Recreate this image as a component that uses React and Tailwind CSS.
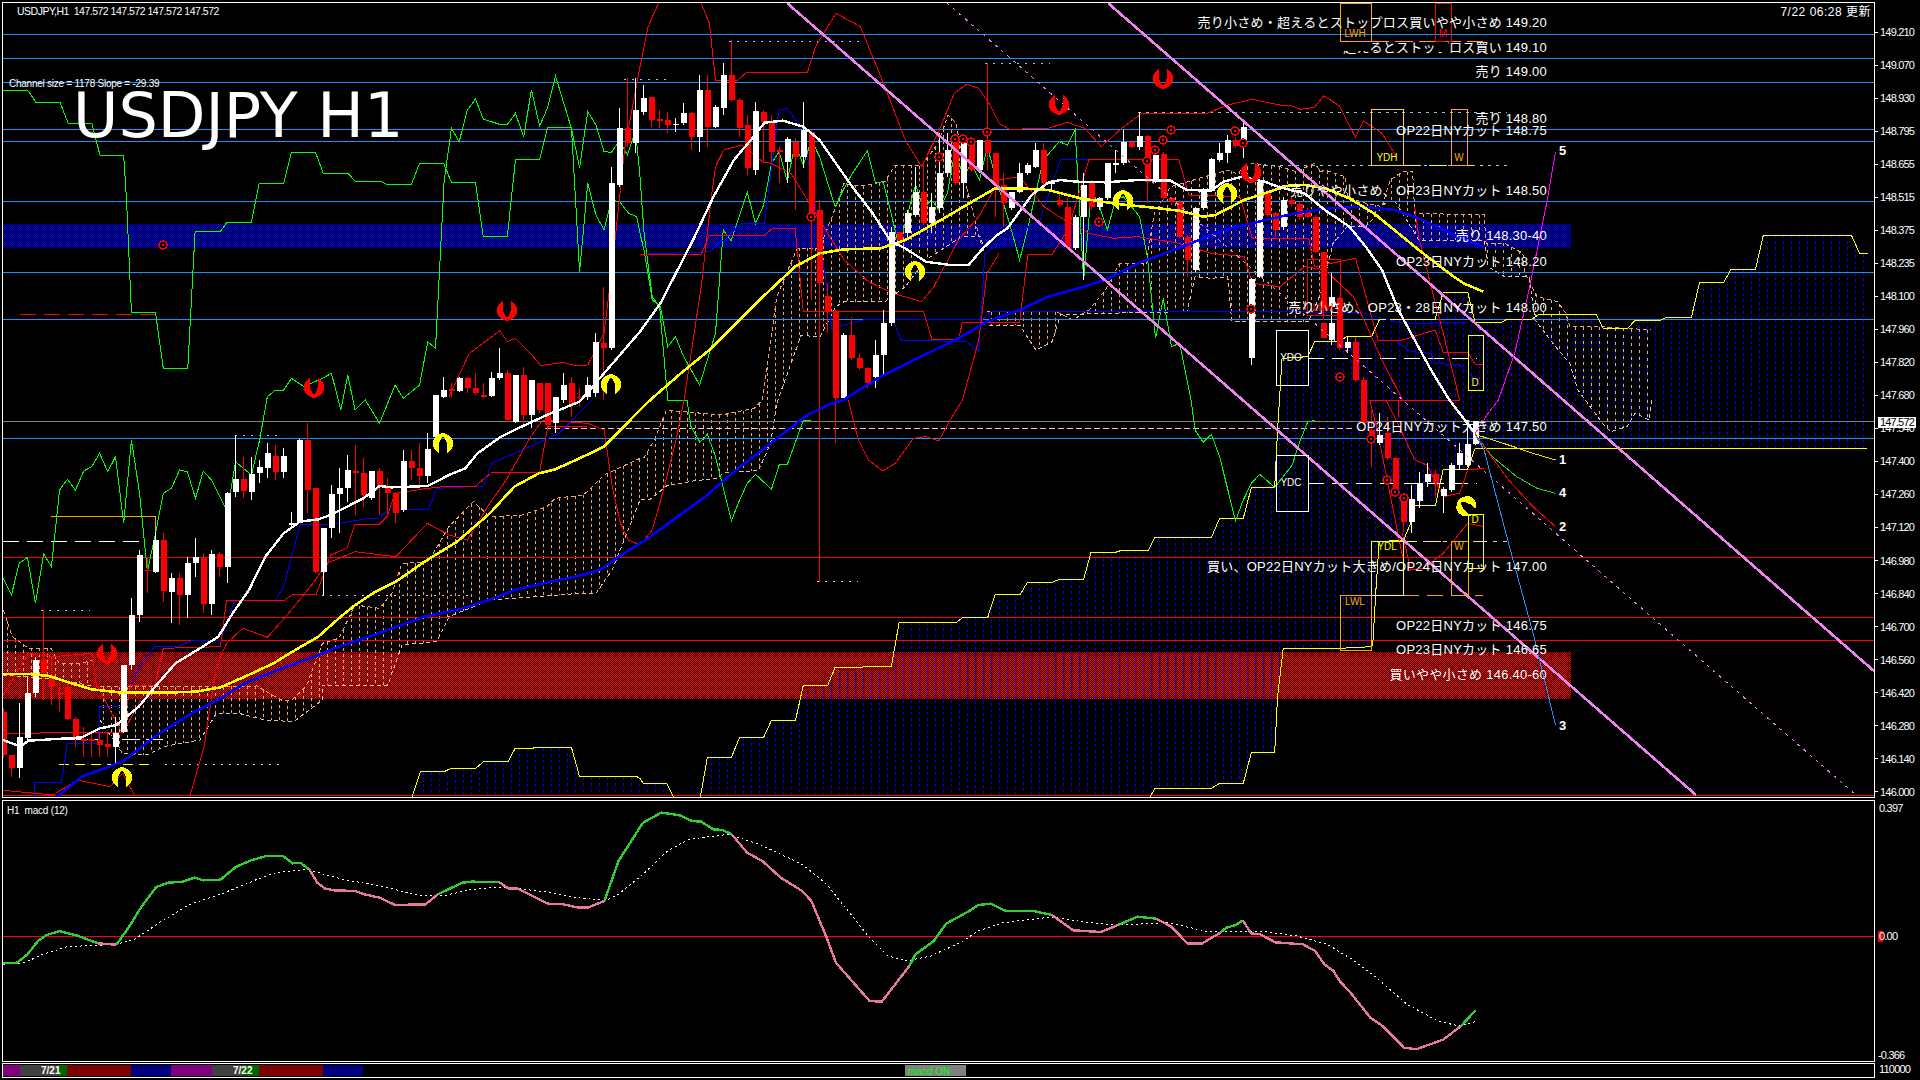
import React from 'react';

const jp = "font-['Liberation_Sans','Noto_Sans_CJK_JP',sans-serif]";

// reference tiles: zoomed coords -> page coords
const tiles = { a: [0, 0], b: [640, 0], c: [1280, 0], d: [0, 400], e: [640, 400], f: [1280, 400] };
const pts = (...parts) => {
  const out = [];
  parts.forEach(([t, arr]) => {
    const [x0, y0] = tiles[t];
    for (let i = 0; i < arr.length; i += 2) out.push([x0 + arr[i] / 2.45, y0 + arr[i + 1] / 3]);
  });
  return out;
};
const str = (p) => p.map((q) => q.join(',')).join(' ');

const at = (poly, x) => {
  for (let i = 0; i < poly.length - 1; i++) {
    const [x1, y1] = poly[i];
    const [x2, y2] = poly[i + 1];
    if (x >= x1 && x <= x2 && x2 !== x1) return y1 + ((y2 - y1) * (x - x1)) / (x2 - x1);
  }
  return null;
};

// candles: color, body top, body bottom, wick top, wick bottom
const candlesA = [
  ['r',935,1065,925,1075],['r',1065,1105,1065,1130],['w',1010,1105,910,1135],['w',880,1015,830,1030],['w',780,880,770,890],
  ['r',780,820,630,900],['r',825,860,770,915],['r',878,882,850,935],['r',862,958,850,960],['r',958,1018,950,1040],
  ['r',1018,1022,980,1070],['r',1018,1023,1000,1070],['r',1020,1035,1000,1070],['r',1032,1042,1000,1070],['w',1000,1040,950,1090],
  ['w',795,995,795,1000],['w',645,795,595,810],['w',465,645,450,665],['r',510,514,470,580],['w',420,515,395,520],
  ['r',420,573,400,605],['w',535,575,520,670],['r',535,585,520,675],['w',490,585,470,655],['w',472,490,415,530],
  ['r',472,612,460,640],['w',462,612,450,645],['r',462,500,455,530],['w',278,500,275,548],['w',238,275,105,290],
  ['r',238,272,170,295],['w',222,275,170,300],['w',200,218,180,250],['w',160,203,130,235],['r',168,215,135,240],
  ['w',168,215,145,235],['w',368,374,335,380],['w',120,365,118,370],['r',120,270,70,340],['r',265,515,263,520],
  ['w',385,515,385,585],['w',283,385,255,415],['w',265,283,205,400],['w',210,265,165,305],['r',213,220,135,345],
  ['r',220,285,175,320],['w',213,295,213,300],['r',213,258,205,345],['r',258,278,235,340],['r',278,340,275,370],
  ['w',183,330,150,335],['r',183,203,150,240],['r',203,228,130,260],['w',148,228,100,250],
];
const candlesB = [
  ['w',1185,1311,1185,1320],['w',1170,1190,1130,1195],['r',1168,1172,1150,1190],['w',1135,1172,1130,1175],['r',1135,1165,1130,1180],
  ['r',1165,1180,1120,1185],['r',1185,1190,1150,1195],['w',1135,1188,1115,1190],['w',1120,1135,1045,1140],['r',1120,1260,1110,1265],
  ['w',1125,1265,1125,1270],['r',1125,1245,1100,1280],['w',1140,1245,1140,1285],['r',1150,1230,1150,1240],['r',1150,1275,1150,1280],
  ['w',1190,1270,1190,1300],['w',1155,1200,1120,1210],['r',1150,1215,1130,1250],['r',1190,1193,1165,1220],['w',1155,1191,1130,1200],
  ['w',1025,1180,1000,1190],['r',1030,1045,860,1200],['w',550,1045,500,1050],['w',385,555,325,560],['r',385,430,235,440],
  ['w',330,430,235,460],['w',295,335,255,345],['r',292,360,290,380],['r',358,362,330,385],['r',360,375,335,400],
  ['w',372,374,355,395],['w',338,370,310,375],['r',340,412,335,450],['w',270,412,225,455],['r',270,380,225,440],
  ['w',320,380,315,385],['w',225,325,190,345],['r',225,300,120,305],['r',300,385,295,410],['r',375,505,345,525],
  ['w',332,510,305,525],['r',335,365,330,490],['r',370,455,345,490],['r',450,455,440,550],['w',418,485,410,550],
  ['r',425,470,415,630],['w',390,470,305,505],['r',395,650,390,900],['r',630,850,600,1745],['r',888,935,850,1000],
  ['r',935,1195,930,1330],['w',1005,1195,1000,1200],['r',1005,1075,950,1080],['r',1075,1105,1060,1110],['r',1105,1150,1100,1165],
  ['w',1065,1130,1020,1165],['w',970,1065,930,1130],['w',695,970,680,978],['r',695,720,695,725],['w',640,700,630,720],
  ['w',575,645,500,650],['r',575,670,490,675],['w',620,670,580,700],['w',520,625,400,640],['w',450,520,400,530],
  ['r',430,550,405,555],['w',430,550,405,595],['r',430,510,420,515],['w',420,510,420,520],['r',420,458,190,510],
  ['r',458,555,458,650],['r',555,610,520,680],['w',575,625,575,630],['w',520,575,490,580],['w',495,520,490,525],
  ['w',450,500,430,505],['r',450,550,430,555],['w',548,552,540,570],['r',600,615,580,620],['r',620,740,590,745],
  ['w',650,745,645,750],['w',555,650,520,840],['r',550,620,540,630],['w',595,620,590,630],['w',490,595,490,600],
  ['w',490,494,450,520],['w',425,490,390,495],['r',425,440,420,445],['w',408,440,335,450],['r',408,545,405,610],
  ['w',465,545,450,550],['r',462,595,455,600],['r',595,605,590,615],['r',605,710,600,715],['r',710,780,705,830],
  ['w',625,810,620,815],['w',572,625,565,630],['w',478,572,475,575],['w',460,480,430,485],['w',420,460,405,490],
  ['r',420,438,410,445],['w',382,425,370,475],['w',838,1075,835,1095],['w',545,830,540,835],['r',575,645,570,650],
  ['r',640,690,635,710],['w',600,680,590,690],['r',600,612,590,620],['r',612,650,605,660],['r',630,650,625,655],
  ['r',650,755,645,760],['r',755,925,755,960],['w',890,920,820,925],['r',895,1045,890,1050],['w',1025,1045,1010,1060],
  ['r',1025,1140,1010,1145],
];
const candlesC = [
  ['r',-60,70,-70,75],['r',90,128,30,200],['w',105,128,40,135],['r',100,175,50,180],['r',175,280,170,290],
  ['r',285,365,280,395],['w',298,365,255,400],['w',248,303,215,325],['w',222,245,190,260],['r',222,250,210,290],
  ['w',268,288,262,340],['w',195,270,190,275],['w',160,195,130,210],['w',132,195,60,200],['w',62,132,62,135],
];
const candles = [
  ...candlesA.map((c) => [400, c]),
  ...candlesB.map((c) => [0, c]),
  ...candlesC.map((c) => [400, c]),
].map(([y0, c], i) => ({
  x: 3 + 8 * i,
  color: c[0] === 'r' ? '#ff0000' : '#ffffff',
  top: y0 + c[1] / 3,
  bot: y0 + c[2] / 3,
  hi: y0 + c[3] / 3,
  lo: y0 + c[4] / 3,
}));
candles.push({ x: 1323, color: '#ff0000', top: 323, bot: 338, hi: 323, lo: 338 });
candles.push({ x: 1331, color: '#ffffff', top: 323, bot: 340, hi: 296, lo: 345 });

// moving averages
const whiteMa = pts(
  ['d', [8,1020,50,1040,70,1022,100,1020,200,1012,245,985,285,975,305,955,340,920,380,860,430,790,490,745,535,710,570,640,610,570,650,470,695,400,735,365,780,358,810,345,850,320,890,295,930,258,960,262,1048,258,1100,225,1140,205,1170,160,1225,112,1260,90,1340,45,1420,5]],
  ['b', [0,995,50,910,90,815,130,720,180,590,230,480,275,415,305,368,350,362,400,380,440,420,480,490,520,560,570,640,615,725,650,745,700,785,760,795,805,795,840,745,875,705,900,685,930,635,960,585,1000,548,1030,540,1070,545,1140,547,1220,540,1300,542,1340,570,1400,572,1430,545,1475,530,1530,545,1568,562]],
  ['c', [60,580,110,630,170,680,210,740,250,810,290,930,330,1020,370,1110,415,1200]],
  ['f', [478,100]],
);
const yellowMa = pts(
  ['d', [8,822,70,822,120,828,170,848,225,868,300,878,400,878,480,875,540,862,600,830,670,790,730,745,780,710,830,655,870,615,920,575,970,545,1040,485,1120,425,1200,340,1260,260,1320,220,1360,208,1420,175,1480,140,1568,30]],
  ['b', [25,1200,100,1120,170,1050,240,965,310,880,380,800,440,760,500,748,590,745,650,720,730,665,800,615,870,565,930,565,1000,570,1080,595,1170,612,1250,622,1320,632,1380,650,1410,645,1480,600,1568,565]],
  ['c', [10,558,60,555,110,565,170,595,230,640,290,700,340,750,420,825,450,850,498,875]],
);
const blueMa = pts(
  ['d', [140,1190,200,1130,300,1085,390,1000,470,940,540,895,600,850,680,810,770,770,830,740,880,720,950,690,1040,650,1120,630,1200,600,1260,570,1350,545,1410,530,1470,510,1510,475,1568,430]],
  ['e', [0,432,70,370,160,290,230,215,320,130,410,45,460,15,498,0]],
  ['b', [590,1130,680,1075,780,1015,850,965,930,930,1000,890,1060,870,1140,840,1220,790,1340,735,1430,690,1568,650]],
  ['c', [60,635,120,625,200,620,280,630,340,655,400,690,498,740]],
);

// thin lines
const greenLines = [
  pts(['a', [8,271,68,271,88,307,147,307,167,370,225,370,245,466,303,466,310,600,322,938,381,938,400,1105,460,1105,478,694,540,694,556,667,616,667,635,550,695,550,714,457,773,457,792,520,852,520,871,544,932,544,947,553,1008,553,1028,490,1087,490,1106,547,1165,547,1184,709,1243,709,1263,478,1322,478,1342,382,1400,382,1420,815,1440,550,1460,645,1480,690,1498,600,1518,605,1540,640,1560,650,1568,700]],
    ['b', [10,750,30,900,50,920,68,1040,87,1010,107,1070,146,1155,185,1000,204,690,223,722,263,577,283,670,303,615,322,490,341,455,361,545,380,430,400,495,420,420,440,470,478,620,498,570,518,525,557,452,577,548,596,545,635,740,655,645,675,555,695,625,714,600,733,630,753,580,772,450,792,530,812,490,832,540,851,440,871,530,910,690,930,780,949,690,988,480,1027,425,1047,435,1066,390,1087,840,1106,570,1125,615,1145,690,1165,600,1184,590,1224,650,1243,770,1263,1015,1282,895,1302,1040,1322,1030,1350,1200]],
    ['e', [1360,90,1380,127,1400,103,1420,170,1459,362,1478,300,1498,250,1518,223,1555,262]],
    ['f', [30,195,47,130,68,65,85,62]]),
  pts(['d', [8,535,28,585,47,490,67,472,87,610,107,462,126,500,146,270,165,238,185,270,205,213,225,200,244,160,264,215,283,170,303,370,322,120,342,280,361,515,381,400,400,280,420,265,440,210,459,215,479,295,498,213,518,240,557,335,577,185,616,225,636,120,655,-10]],
    ['a', [675,1170,695,1170,714,1135,745,1160,790,1135,812,1120,835,1230,852,1125,870,1230,895,1200,930,1270,968,1155,988,1195,1028,1155,1048,1025,1067,1045,1088,545,1106,385,1125,425,1145,330,1165,297,1184,357,1224,373,1243,373,1263,340,1283,410,1302,270,1322,378,1341,325,1361,228,1400,385,1420,503,1440,335,1460,375,1480,455,1498,457,1518,422,1537,465,1557,390,1568,530]],
    ['b', [0,530,10,700,30,890,48,920,68,1200]],
    ['e', [115,0,125,80,147,127,165,103,185,170,224,362,244,300,263,250,283,223,322,268,341,195,361,193,400,62,420,60]]),
];
const redCurves = [
  pts(['a', [1100,1190,1150,1060,1225,992,1243,1025,1263,1015,1300,1060,1325,1097,1380,1087,1410,1097,1440,1095,1480,1000,1500,800,1530,450,1568,200]],
    ['b', [0,200,20,80,45,10]]),
  pts(['b', [150,10,170,70,185,240,240,240,260,218,410,218,430,140,480,40,540,80,600,260,650,420,690,500,730,400,770,280,800,253,830,265,860,320,880,370,905,388,1000,385,1047,367,1090,385,1130,440,1180,385,1230,340,1390,340,1440,315,1500,298,1568,315]],
    ['c', [30,318,50,328,85,322,107,287,145,317,185,412,205,363,250,400,285,470]]),
  pts(['d', [465,1190,500,1040,530,800,555,730,595,685,655,712,700,650,770,545,800,490,870,455,970,470,1047,370,1100,405,1145,420,1200,310,1240,240,1300,110,1330,60,1440,70,1480,90,1500,260,1520,370,1540,420,1568,435]],
    ['e', [30,390,60,260,90,110,108,0]],
    ['b', [150,860,175,590,185,500,205,450,250,435,300,485,320,490,370,520,430,640,500,780,560,845,620,880,690,905,720,860,780,720,830,650,880,540,930,530,990,620,1040,660,1100,700,1160,715,1220,710,1320,730,1400,760,1480,770,1500,850,1568,860]]),
  pts(['e', [510,0,535,120,560,180,595,213,625,190,670,115,700,110,732,123,760,60,790,0]],
    ['b', [830,1020,850,820,880,760]]),
  pts(['d', [0,1170,130,1185,190,1140,270,1160,300,1120,330,1185]]),
  pts(['d', [0,900,70,760,130,770,225,760,235,850,300,1000,345,900]]),
  pts(['c', [330,620,340,710,370,860,400,1000,440,1200]], ['f', [290,0,290,50]]),
  pts(['c', [0,860,60,800,110,810,180,890,250,1080,300,1200]], ['f', [220,0,240,100,300,470]]),
  pts(['f', [300,400,320,510,350,505,400,460,460,370,500,380]]),
  pts(['f', [260,0,300,100,330,180,360,195,400,290,440,280,460,210,500,205]]),
];
const redSteps = [
  pts(['d', [0,1000,300,997,320,855,380,855,400,745,540,740,555,602,695,602,720,582,775,582,810,465,850,445,870,372,930,372,948,350,968,280,1048,265,1100,258,1165,258,1205,217,1322,217,1342,80,1440,78]]),
  pts(['b', [0,763,150,763,170,705,305,705,325,685,380,685,400,935,695,935,715,1018,780,1018,790,968,930,968,950,763,1010,763,1050,685,1100,478,1320,478,1345,585,1470,590,1500,715,1568,715]],
    ['c', [70,715,85,800,185,775,240,1020,300,1020,380,990,400,1057,460,1057,478,1093,500,1093]]),
];
const blueSteps = [
  pts(['d', [85,1190,85,1148,150,1148,165,1030,240,1030,245,920,300,920,340,800,380,738,440,738,470,722,540,722,575,602,675,600,695,560,735,375,810,372,830,370,905,355,930,355,950,328,1050,328,1070,265,1185,258,1205,190,1370,100,1450,0]]),
  pts(['b', [0,763,170,755,250,670,305,670,340,330,360,325,400,390,440,700,470,985,555,957,840,957,860,935,1568,935]]),
  pts(['b', [620,960,640,1020,800,1025,830,1055,845,760,870,740,980,660,1030,480,1100,478,1320,478,1340,570]]),
  pts(['c', [0,935,200,938,300,970,460,968]]),
  pts(['c', [280,1020,320,1055,370,1060,380,1090,440,1095,480,1140]]),
];

// forecast fan from the last bar
const forecast = [
  ['#ffd700', pts(['f', [478,103,560,135,620,160,675,180]])],
  ['#32cd32', pts(['f', [478,103,520,170,580,230,630,265,675,280]])],
  ['#ff0000', pts(['f', [478,103,560,240,620,320,675,380]])],
  ['#1e90ff', pts(['f', [478,103,500,150,560,430,620,700,675,975]])],
  ['#ff00ff', pts(['f', [478,100,510,40,535,0]], ['c', [575,1060,610,870,655,600,675,455]])],
];

// kumo: [top, bottom, stroke]
const peach = '#f4a460';
const clouds = [
  [pts(['d', [8,630,30,710,70,745,125,745,145,790,200,790,225,780]]), pts(['d', [8,825,60,830,150,840,225,858]])],
  [pts(['d', [245,860,540,860,630,858,660,880,690,900,715,900,750,860,790,730,830,715,870,615,930,625,960,580,985,490,1050,485,1100,380,1160,305,1200,350,1280,345,1340,320,1360,295,1430,285,1480,225,1568,175]], ['e', [10,172,35,120,65,30,105,35,200,45,280,25,300,0]], ['b', [335,890,385,745,440,745,480,620,500,550,540,558,600,545,625,495,690,497,730,430,755,345,775,370,800,560,830,705,845,770]]),
    pts(['d', [245,960,300,1060,360,1065,400,1040,490,1020,530,940,585,940,650,960,720,965,790,900,790,855,950,855,985,735,1070,725,1100,650,1200,600,1400,582,1460,580,1500,510,1568,300]], ['e', [25,298,65,258,130,243,190,235,205,218,290,212,320,130,335,10]], ['b', [395,1005,440,1012,480,920,500,905,600,905,650,860,700,780,790,708,835,708,845,770]])],
  [pts(['b', [850,935,1020,935,1060,960,1100,930,1140,870,1175,790,1240,790,1260,640,1300,560,1440,510,1460,520,1500,490,1568,500]], ['c', [40,515,85,490,100,515,110,510,160,530,165,590,210,610,250,620,270,540,300,515,325,515,330,640,500,645,505,730,550,730,595,760,600,820,630,890,680,905,700,940,710,980,790,980,850,985,910,990]]),
    pts(['b', [855,975,930,975,970,1050,1010,1025,1030,945,1135,940,1340,935,1360,830,1400,835,1440,830,1450,965,1568,965]], ['c', [70,965,100,880,130,730,165,680,210,680,240,640,250,615,280,600,340,720,500,720,510,800,550,830,610,830,625,960,650,1000,675,1040,710,1090,730,1170,790,1270,810,1295,850,1280,870,1240,905,1260,910,1200]])],
];

const yellowTop1 = pts(['d', [1010,1190,1030,1115,1088,1115,1105,1105,1165,1105,1185,1085,1245,1085,1262,1045,1400,1042,1420,1130,1560,1130,1568,1135]], ['e', [8,1150,65,1150,82,1190]]);
const yellowTop2 = pts(
  ['e', [148,1190,165,1072,224,1072,244,1012,303,1012,322,961,381,961,400,856,460,856,478,802,545,802,548,798,616,798,635,667,775,667,792,652,852,652,870,583,932,583,949,547,1010,547,1027,538,1087,538,1105,457,1165,457,1180,451,1245,451,1262,412,1400,412,1420,355,1478,355,1498,262,1555,262,1562,90]],
  ['c', [5,1075,68,1070,85,1025,145,1025,165,1008,225,1008,244,958,380,958,400,877,460,877,478,968,540,968,556,958,616,958,635,943,775,943,792,985,852,985,870,961,932,961,947,952,1008,952,1028,847,1087,847,1105,808,1165,808,1184,706,1400,706,1420,760,1440,762]],
);
const yellowLow = pts(
  ['e', [1250,1190,1262,1165,1400,1165,1420,1150,1478,1150,1498,1057,1555,1057,1562,890]],
  ['f', [8,745,145,745,225,740,228,720,235,570,243,425,303,420,320,370,325,315,381,315,400,207,460,207,478,145]],
);
const yellowBottom = [[640 + 148 / 2.45, 795], [640 + 1250 / 2.45, 795], ...yellowLow, [1867, 448]];

const columns = (top, bot) => {
  const out = [];
  for (let i = 0; i < 244; i++) {
    const x = 3 + 8 * i + 4;
    const y1 = at(top, x);
    const y2 = at(bot, x);
    if (y1 != null && y2 != null && y2 > y1) out.push([x, y1, y2]);
  }
  return out;
};
const hatchPeach = clouds.flatMap(([t, b]) => columns(t, b));
const hatchBlue = [
  ...columns(yellowTop1, [[yellowTop1[0][0], 795], [yellowTop1[yellowTop1.length - 1][0], 795]]),
  ...columns(yellowTop2, yellowBottom),
];

const blueLevels = [34, 58, 82, 129, 141, 201, 272, 319, 438];
const redLevels = [557, 617, 640, 795];
const dashes = [
  // x1, x2, y, color, dash
  [729, 860, 41, '#87ceeb', '2 6'], [985, 1050, 63, '#87ceeb', '2 6'], [624, 667, 79, '#87ceeb', '2 6'],
  [1138, 1507, 112, '#87ceeb', '3 5'], [1256, 1507, 165, '#87ceeb', '3 5'],
  [235, 282, 435, '#87ceeb', '2 6'], [41, 90, 610, '#87ceeb', '2 6'],
  [165, 282, 764, '#ffc0cb', '2 6'], [322, 473, 595, '#ffc0cb', '2 6'], [545, 1353, 428, '#ffc0cb', '6 3'],
  [817, 858, 581, '#ffc0cb', '2 6'], [1403, 1507, 541, '#ffc0cb', '4 6'],
  [59, 149, 764, '#ffff00', '10 6'], [3, 147, 541, '#ffffff', '16 8'], [20, 155, 314, '#ff0000', '16 8'],
  [28, 100, 739, '#ffffff', '28 4'], [122, 163, 739, '#ffffff', '18 6'],
  [1403, 1483, 165, '#ffff00', '18 8'], [1403, 1483, 541, '#ffff00', '14 10'],
  [1371, 1483, 41, '#ffa500', '18 6'], [1403, 1483, 595, '#ffa500', '16 8'],
  [1308, 1477, 358, '#ffffff', '16 8'], [1308, 1477, 483, '#ffffff', '16 8'],
];
const boxes = [
  [1340, 3, 31, 38, '#ffa500'], [1435.5, 3, 15.5, 38, '#ff0000'], [1371.5, 109, 31.5, 56, '#ffd700'],
  [1451.5, 109, 16, 56, '#ffa500'], [1307, 259, 33, 56, '#ff0000'], [1468, 335, 15, 55, '#ffff00'],
  [1276, 330, 32, 55, '#ffffff'], [1276, 455, 32, 56, '#ffffff'], [1371.5, 541, 31.5, 54, '#ffff00'],
  [1451.5, 541, 16.5, 54, '#ffa500'], [1468, 514, 15, 54, '#ffff00'], [1340, 595, 31, 55, '#ffa500'],
];

const horseshoe = 'M-4,-9 C-8,-7 -10,-2 -9.5,1 C-9,5 -5,8 -1,9 L1,9 C5,8 9,5 9.5,1 C10,-2 8,-7 4,-9 C4,-4 4,0 2,4 L0,6 L-2,4 C-4,0 -4,-4 -4,-9 Z';
const redShoes = [[507, 311], [314, 388], [107, 654], [1059, 105], [1163, 79], [1251, 173]];
const yellowShoes = [[443, 443, 180], [611, 384, 180], [122, 777, 180], [915, 271, 180], [1123, 200, 180], [1227, 193, 180], [1466, 506, 130]];
const targets = [[163, 245], [811, 217], [939, 157], [955, 139], [963, 139], [971, 142], [987, 132], [1099, 222], [1147, 161], [1155, 150], [1163, 140], [1171, 130], [1235, 131], [1243, 143], [1251, 309], [1340, 377], [1371, 439], [1387, 480], [1395, 492], [1404, 498]];

const labels = [
  [23, '売り小さめ・超えるとストップロス買いやや小さめ 149.20'],
  [48, '超えるとストップロス買い 149.10'],
  [71.5, '売り 149.00'],
  [118.5, '売り 148.80'],
  [130.5, 'OP22日NYカット 148.75'],
  [190.5, '売りやや小さめ、OP23日NYカット 148.50'],
  [235.5, '売り 148.30-40'],
  [262, 'OP23日NYカット 148.20'],
  [308, '売り小さめ、OP23・28日NYカット 148.00'],
  [427, 'OP24日NYカット大きめ 147.50'],
  [567, '買い、OP22日NYカット大きめ/OP24日NYカット 147.00'],
  [625.5, 'OP22日NYカット 146.75'],
  [649.5, 'OP23日NYカット 146.65'],
  [674.5, '買いやや小さめ 146.40-60'],
];
const boxTags = [
  [1355, 34, 'LWH', 'text-[#ffa500]'], [1443, 34, 'M', 'text-[#ff0000]'], [1387, 158, 'YDH', 'text-[#ffff00]'],
  [1459, 158, 'W', 'text-[#ffa500]'], [1323, 308, 'LMH', 'text-[#ff0000]'], [1475, 383, 'D', 'text-[#ffff00]'],
  [1291, 358, 'YDO', 'text-white'], [1291, 483, 'YDC', 'text-white'], [1387, 547, 'YDL', 'text-[#ffff00]'],
  [1459, 547, 'W', 'text-[#ffa500]'], [1475, 520, 'D', 'text-[#ffff00]'], [1355, 602, 'LWL', 'text-[#ffa500]'],
];
const fanTags = [[1559, 151, '5'], [1559, 460, '1'], [1559, 493, '4'], [1559, 527, '2'], [1559, 726, '3']];

const priceAxis = ['149.210','149.070','148.930','148.795','148.655','148.515','148.375','148.235','148.100','147.960','147.820','147.680','147.540','147.400','147.260','147.120','146.980','146.840','146.700','146.560','146.420','146.280','146.140','146.000'];

// macd, tile coords x/1.633 y/3
const mz = (left, arr) => {
  const out = [];
  for (let i = 0; i < arr.length; i += 2) out.push([left + arr[i] / 1.633, 780 + arr[i + 1] / 3]);
  return out;
};
const macdSegs = [
  ['#32cd32', mz(0, [5,547,28,545,45,520,62,480,75,463,97,450,125,463,160,487])],
  ['#e878a0', mz(0, [160,487,190,491])],
  ['#32cd32', mz(0, [190,491,210,440,230,380,255,318,275,305,298,302,318,290,332,298,360,296,385,258,410,238,435,225,462,225,478,247,490,245,505,265])],
  ['#e878a0', mz(0, [505,265,518,305,530,322,545,328,580,330,595,340,620,350,645,372,695,370,715,340])],
  ['#32cd32', mz(0, [715,340,755,305,770,302,815,303])],
  ['#e878a0', mz(0, [815,303,830,322,845,322,895,368,920,370,945,380,960,380,987,360])],
  ['#32cd32', mz(0, [987,360,1010,240,1050,125,1080,95,1110,103,1130,120,1145,122,1165,145,1180,147,1195,160])],
  ['#e878a0', mz(0, [1195,160,1220,215,1245,240,1275,290,1310,330,1325,360,1350,470,1365,545,1420,660,1440,662,1485,555])],
  ['#32cd32', [...mz(0, [1485,555,1495,520,1525,480,1545,428,1568,405]), ...mz(960, [15,390,30,372,50,368,75,390,120,390,150,402])]],
  ['#e878a0', mz(960, [150,402,185,448,230,453,258,432])],
  ['#32cd32', mz(960, [258,432,290,407,320,413])],
  ['#e878a0', mz(960, [320,413,345,437,372,488,395,488,425,455])],
  ['#32cd32', mz(960, [425,455,435,440,450,432,462,418])],
  ['#e878a0', mz(960, [462,418,475,457,490,460,515,484,560,490,580,510,595,550,610,570,620,600,640,640,670,710,690,735,725,800,745,805,790,775,818,735])],
  ['#32cd32', mz(960, [818,735,842,688])],
];
const macdSignal = [
  ...mz(0, [5,550,40,545,70,520,110,497,190,490,220,475,260,425,310,370,360,340,420,295,450,275,500,265,560,295,620,315,690,345,730,342,770,325,820,318,890,332,950,352,990,358,1010,340,1050,280,1090,210,1125,175,1190,160,1240,190,1310,250,1350,310,1385,390,1420,470,1450,525,1480,540,1520,525,1568,485]),
  ...mz(960, [30,450,70,425,150,408,210,425,260,432,340,425,400,450,490,450,550,465,600,490,640,535,680,590,730,670,780,720,815,735,842,722]),
];

const Line = ({ p, color, w = 1, dash }) => (
  <polyline points={str(p)} fill="none" stroke={color} strokeWidth={w} strokeDasharray={dash} />
);

function PriceSvg() {
  return (
    <svg className="block" width="1871" height="794" viewBox="3 3 1871 794" shapeRendering="crispEdges">
      <defs>
        <pattern id="navyDither" width="2" height="2" patternUnits="userSpaceOnUse">
          <rect width="1" height="1" fill="#0000ff" />
          <rect x="1" y="1" width="1" height="1" fill="#0000ff" />
        </pattern>
        <pattern id="redDither" width="2" height="2" patternUnits="userSpaceOnUse">
          <rect width="1" height="1" fill="#ff0000" />
          <rect x="1" y="1" width="1" height="1" fill="#ff0000" />
        </pattern>
      </defs>
      <rect x="3" y="224" width="1568" height="24" fill="url(#navyDither)" />
      <rect x="3" y="652" width="1568" height="47" fill="url(#redDither)" />

      {hatchBlue.map(([x, a, b]) => (
        <line key={`hb${x}${a}`} x1={x + 0.5} x2={x + 0.5} y1={a} y2={b} stroke="#0000ff" strokeDasharray="3 3" />
      ))}
      {hatchPeach.map(([x, a, b]) => (
        <line key={`hp${x}${a}`} x1={x + 0.5} x2={x + 0.5} y1={a} y2={b} stroke={x > 1480 ? '#d9b090' : peach} strokeDasharray={x > 1480 ? '3 4' : '3 3'} />
      ))}
      {clouds.flatMap(([t, b], i) => [
        <Line key={`ct${i}`} p={t} color={peach} dash="4 3" />,
        <Line key={`cb${i}`} p={b} color="#e8c0a0" dash="4 3" />,
      ])}

      {blueLevels.map((y) => (
        <line key={y} x1="3" x2="1874" y1={y + 0.5} y2={y + 0.5} stroke="#1e90ff" />
      ))}
      <line x1="3" x2="1874" y1="421.5" y2="421.5" stroke="#808080" />
      {redLevels.map((y) => (
        <line key={y} x1="3" x2="1874" y1={y + 0.5} y2={y + 0.5} stroke="#ff0000" />
      ))}
      <polyline points="51,516.5 155.5,516.5 155.5,541" fill="none" stroke="#ffa500" />
      <line x1="1475" x2="1867" y1="448.5" y2="448.5" stroke="#ffff00" />
      {dashes.map(([a, b, y, c, d]) => (
        <line key={`${a}-${y}`} x1={a} x2={b} y1={y + 0.5} y2={y + 0.5} stroke={c} strokeDasharray={d} />
      ))}

      <Line p={yellowTop1} color="#ffff00" />
      <Line p={yellowTop2} color="#ffff00" />
      <Line p={yellowLow} color="#ffff00" />

      {greenLines.map((p, i) => <Line key={i} p={p} color="#00ff00" />)}
      {blueSteps.map((p, i) => <Line key={i} p={p} color="#0000ff" />)}
      {redSteps.map((p, i) => <Line key={i} p={p} color="#ff0000" />)}
      {redCurves.map((p, i) => <Line key={i} p={p} color="#ff0000" />)}

      {candles.map((c, i) => (
        <g key={i} fill={c.color}>
          <rect x={c.x} y={c.hi} width="1" height={Math.max(c.lo - c.hi, 1)} />
          <rect x={c.x - 2} y={c.top} width="6" height={Math.max(c.bot - c.top, 1)} />
        </g>
      ))}

      <Line p={blueMa} color="#0000ff" w={2.6} />
      <Line p={yellowMa} color="#ffff00" w={2.6} />
      <Line p={whiteMa} color="#ffffff" w={2.4} />

      <line x1="787" y1="3" x2="1696" y2="795" stroke="#ee82ee" strokeWidth="2.6" />
      <line x1="1108" y1="3" x2="1874" y2="671" stroke="#ee82ee" strokeWidth="2.6" />
      <line x1="947" y1="3" x2="1856" y2="795" stroke="#ee82ee" strokeDasharray="3 5" />

      {boxes.map(([x, y, w, h, c]) => (
        <rect key={`${x}${y}`} x={Math.floor(x) + 0.5} y={y + 0.5} width={w} height={h} fill="none" stroke={c} />
      ))}
      {forecast.map(([c, p]) => <Line key={c} p={p} color={c} />)}

      {targets.map(([x, y]) => (
        <g key={`${x}${y}`}>
          <circle cx={x} cy={y} r="4" fill="#000000" stroke="#ff0000" strokeWidth="1.5" />
          <rect x={x - 1} y={y - 1} width="2" height="2" fill="#ff0000" />
        </g>
      ))}
      {redShoes.map(([x, y]) => (
        <path key={`${x}`} d={horseshoe} transform={`translate(${x} ${y}) scale(1.08)`} fill="#ff0000" />
      ))}
      {yellowShoes.map(([x, y, r]) => (
        <path key={`${x}`} d={horseshoe} transform={`translate(${x} ${y}) rotate(${r}) scale(1.08)`} fill="#ffff00" />
      ))}
    </svg>
  );
}

export default function App() {
  return (
    <div className={`flex h-[1080px] w-[1920px] flex-col gap-[1px] bg-black pl-[2px] pt-[2px] text-white ${jp}`}>
      {/* price panel */}
      <div className="flex h-[796px]">
        <div className="relative h-[796px] w-[1873px] overflow-hidden border border-white">
          <PriceSvg />
          <div className="absolute left-[14px] top-[2px] whitespace-nowrap text-[10.5px] leading-[12px] tracking-[-0.5px]">USDJPY,H1&nbsp;&nbsp;147.572 147.572 147.572 147.572</div>
          <div className="absolute left-[6px] top-[75px] whitespace-nowrap text-[10px] leading-[12px] tracking-[-0.25px]">Channel size = 1178 Slope = -29.39</div>
          <div className="absolute left-[70px] top-[82px] whitespace-nowrap font-['DejaVu_Sans',sans-serif] text-[62px] leading-[62px]">USDJPY H1</div>
          <div className="absolute right-[3px] top-[2px] whitespace-nowrap text-[12px] leading-[14px] tracking-[0.5px]">7/22 06:28 更新</div>
          {labels.map(([y, text]) => (
            <div key={text} className="absolute right-[327px] -translate-y-1/2 whitespace-nowrap text-[13px] leading-[14px] tracking-[0.25px]" style={{ top: y - 3 }}>
              {text}
            </div>
          ))}
          {boxTags.map(([x, y, text, color]) => (
            <div key={`${x}${y}`} className={`absolute -translate-x-1/2 -translate-y-1/2 text-[10px] leading-[12px] ${color}`} style={{ left: x - 3, top: y - 3 }}>
              {text}
            </div>
          ))}
          {fanTags.map(([x, y, text]) => (
            <div key={text} className="absolute -translate-y-1/2 text-[13px] font-bold leading-[14px]" style={{ left: x - 3, top: y - 3 }}>
              {text}
            </div>
          ))}
          {/* parts of the 149.10 label are hidden by erased objects */}
          <div className="absolute left-[1338px] top-[39px] h-[9px] w-[30px] bg-black" />
          <div className="absolute left-[1433px] top-[39px] h-[10px] w-[12px] bg-black" />
        </div>
        <div className="relative flex h-[796px] flex-1 flex-col justify-between pt-[24px] text-[11px] leading-[12px]">
          {priceAxis.map((v) => (
            <div key={v} className="flex items-center gap-[2px]">
              <span className="h-px w-[3px] bg-white" />
              <span className="tracking-[-0.8px]">{v}</span>
            </div>
          ))}
          <div className="absolute left-[3px] top-[415px] h-[11px] w-[38px] bg-white text-center text-[11px] leading-[11px] tracking-[-0.8px] text-black">147.572</div>
        </div>
      </div>

      {/* macd panel */}
      <div className="mt-[1px] flex h-[262px]">
        <div className="relative h-[262px] w-[1873px] overflow-hidden border border-white">
          <svg className="block" width="1871" height="260" viewBox="3 800 1871 260" shapeRendering="crispEdges">
            <line x1="3" x2="1874" y1="935.5" y2="935.5" stroke="#ff0000" />
            <Line p={macdSignal} color="#ffffff" dash="2 3" />
            {macdSegs.map(([c, p], i) => <Line key={i} p={p} color={c} w={2.4} />)}
          </svg>
          <div className="absolute left-[4px] top-[4px] whitespace-nowrap text-[10px] leading-[12px] tracking-[-0.2px]">H1&nbsp;&nbsp;macd (12)</div>
        </div>
        <div className="relative flex-1 text-[11px] leading-[12px] tracking-[-0.8px]">
          <div className="absolute left-[4px] top-[2px]">0.397</div>
          <div className="absolute left-[3px] top-[131px] flex items-center">
            <span className="h-[11px] w-[5px] bg-[#ff0000]" />
          </div>
          <div className="absolute left-[4px] top-[130px]">0.00</div>
          <div className="absolute left-[3px] top-[249px]">-0.366</div>
        </div>
      </div>

      {/* period separators */}
      <div className="flex h-[15px]">
        <div className="flex h-[15px] w-[1873px] items-stretch border-x border-y border-white py-[1px] text-[10px] font-bold leading-[12px]">
          <span className="w-[17px] bg-[#800080]" />
          <span className="w-[38px] whitespace-nowrap bg-[#404040] pl-[21px]"><span className="relative z-10">7/21</span></span>
          <span className="w-[9px] bg-[#006400]" />
          <span className="w-[64px] bg-[#7f0000]" />
          <span className="w-[40px] bg-[#00007f]" />
          <span className="w-[41px] bg-[#800080]" />
          <span className="w-[30px] whitespace-nowrap bg-[#404040] pl-[21px]"><span className="relative z-10">7/22</span></span>
          <span className="w-[17px] bg-[#006400]" />
          <span className="w-[64px] bg-[#7f0000]" />
          <span className="w-[40px] bg-[#00007f]" />
          <span className="ml-[542px] w-[61px] whitespace-nowrap bg-[#808080] pl-[3px] pt-[1px] font-normal text-[#00ff00]">macd ON</span>
        </div>
        <div className="flex-1 pl-[4px] text-[11px] leading-[12px] tracking-[-0.8px]">110000</div>
      </div>
    </div>
  );
}
